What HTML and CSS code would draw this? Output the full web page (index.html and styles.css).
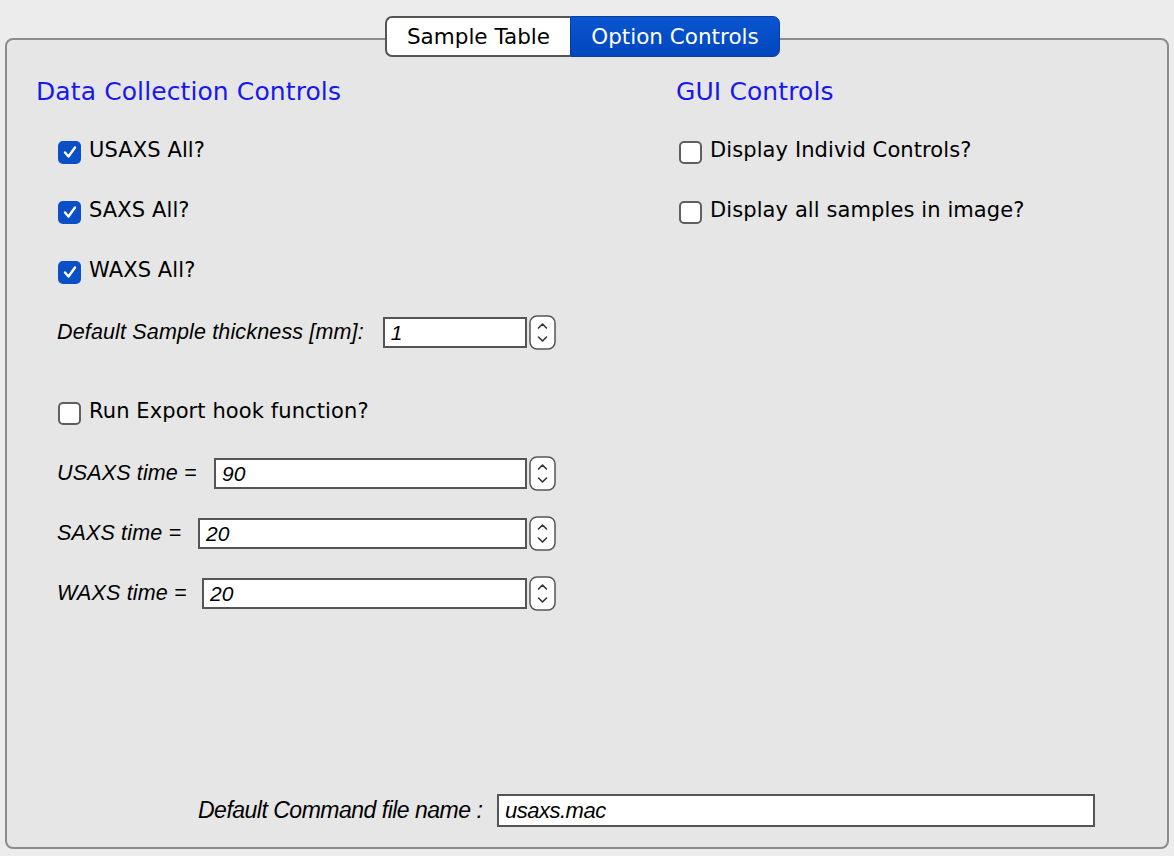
FILE: index.html
```html
<!DOCTYPE html>
<html>
<head>
<meta charset="utf-8">
<link rel="stylesheet" href="styles.css">
</head>
<body>
<div class="tabbar">
  <div class="tab tab-off">Sample Table</div>
  <div class="tab tab-on">Option Controls</div>
</div>
<div class="panel">
  <div class="columns">
    <div class="col col-left">
      <div class="heading">Data Collection Controls</div>
      <div class="row"><span class="cb checked"><svg viewBox="0 0 22 22" width="22" height="22"><path d="M6 11.5 L9.5 15.5 L16 6.5" fill="none" stroke="#fff" stroke-width="2.4" stroke-linecap="round" stroke-linejoin="round"/></svg></span><span class="cblabel">USAXS All?</span></div>
      <div class="row"><span class="cb checked"><svg viewBox="0 0 22 22" width="22" height="22"><path d="M6 11.5 L9.5 15.5 L16 6.5" fill="none" stroke="#fff" stroke-width="2.4" stroke-linecap="round" stroke-linejoin="round"/></svg></span><span class="cblabel">SAXS All?</span></div>
      <div class="row"><span class="cb checked"><svg viewBox="0 0 22 22" width="22" height="22"><path d="M6 11.5 L9.5 15.5 L16 6.5" fill="none" stroke="#fff" stroke-width="2.4" stroke-linecap="round" stroke-linejoin="round"/></svg></span><span class="cblabel">WAXS All?</span></div>
      <div class="row field-row">
        <span class="flabel">Default Sample thickness [mm]:</span>
        <span class="input w-thick">1</span>
        <span class="spin"><svg viewBox="0 0 27 35" width="27" height="35"><rect x="1" y="1" width="25" height="33" rx="7" fill="#fff" stroke="#555" stroke-width="1.5"/><path d="M9.5 13 L13.5 9 L17.5 13" fill="none" stroke="#333" stroke-width="1.6" stroke-linecap="round" stroke-linejoin="round"/><path d="M9.5 22 L13.5 26 L17.5 22" fill="none" stroke="#333" stroke-width="1.6" stroke-linecap="round" stroke-linejoin="round"/></svg></span>
      </div>
      <div class="row row-gap"><span class="cb"></span><span class="cblabel">Run Export hook function?</span></div>
      <div class="row field-row">
        <span class="flabel l-usaxs">USAXS time = </span>
        <span class="input grow">90</span>
        <span class="spin"><svg viewBox="0 0 27 35" width="27" height="35"><rect x="1" y="1" width="25" height="33" rx="7" fill="#fff" stroke="#555" stroke-width="1.5"/><path d="M9.5 13 L13.5 9 L17.5 13" fill="none" stroke="#333" stroke-width="1.6" stroke-linecap="round" stroke-linejoin="round"/><path d="M9.5 22 L13.5 26 L17.5 22" fill="none" stroke="#333" stroke-width="1.6" stroke-linecap="round" stroke-linejoin="round"/></svg></span>
      </div>
      <div class="row field-row">
        <span class="flabel l-saxs">SAXS time = </span>
        <span class="input grow">20</span>
        <span class="spin"><svg viewBox="0 0 27 35" width="27" height="35"><rect x="1" y="1" width="25" height="33" rx="7" fill="#fff" stroke="#555" stroke-width="1.5"/><path d="M9.5 13 L13.5 9 L17.5 13" fill="none" stroke="#333" stroke-width="1.6" stroke-linecap="round" stroke-linejoin="round"/><path d="M9.5 22 L13.5 26 L17.5 22" fill="none" stroke="#333" stroke-width="1.6" stroke-linecap="round" stroke-linejoin="round"/></svg></span>
      </div>
      <div class="row field-row">
        <span class="flabel l-waxs">WAXS time = </span>
        <span class="input grow">20</span>
        <span class="spin"><svg viewBox="0 0 27 35" width="27" height="35"><rect x="1" y="1" width="25" height="33" rx="7" fill="#fff" stroke="#555" stroke-width="1.5"/><path d="M9.5 13 L13.5 9 L17.5 13" fill="none" stroke="#333" stroke-width="1.6" stroke-linecap="round" stroke-linejoin="round"/><path d="M9.5 22 L13.5 26 L17.5 22" fill="none" stroke="#333" stroke-width="1.6" stroke-linecap="round" stroke-linejoin="round"/></svg></span>
      </div>
    </div>
    <div class="col col-right">
      <div class="heading">GUI Controls</div>
      <div class="row"><span class="cb"></span><span class="cblabel">Display Individ Controls?</span></div>
      <div class="row"><span class="cb"></span><span class="cblabel">Display all samples in image?</span></div>
    </div>
  </div>
  <div class="bottom">
    <span class="blabel">Default Command file name :</span>
    <span class="input binput">usaxs.mac</span>
  </div>
</div>
</body>
</html>
```

FILE: styles.css
```css
html, body {
  margin: 0;
  padding: 0;
  background: #ececec;
}
body {
  width: 1174px;
  height: 856px;
  overflow: hidden;
  font-family: "DejaVu Sans", "Noto Sans", sans-serif;
  color: #000;
}
.tabbar {
  position: relative;
  z-index: 2;
  display: flex;
  margin: 16px 0 -19px 385px;
  width: 395px;
  height: 41px;
}
.tab {
  box-sizing: border-box;
  height: 41px;
  display: flex;
  align-items: center;
  justify-content: center;
  font-size: 21.5px;
}
.tab-off {
  width: 185px;
  background: #fff;
  border: 2px solid #555;
  border-right: none;
  border-radius: 7px 0 0 7px;
  color: #000;
}
.tab-on {
  width: 210px;
  background: linear-gradient(#0a55d0, #0047bd);
  border: 1px solid #0a3f9e;
  border-radius: 0 7px 7px 0;
  color: #fff;
}
.panel {
  box-sizing: border-box;
  margin-left: 5px;
  width: 1164px;
  height: 811px;
  background: #e6e6e6;
  border: 2px solid #8c8c8c;
  border-radius: 8px;
  display: flex;
  flex-direction: column;
  padding: 20px 0 0 29px;
}
.columns {
  display: flex;
  flex: 1;
}
.col-left {
  width: 640px;
  display: flex;
  flex-direction: column;
}
.col-right {
  flex: 1;
  display: flex;
  flex-direction: column;
}
.heading {
  color: #1818ec;
  font-size: 25px;
  height: 62px;
  line-height: 64px;
  letter-spacing: 0.1px;
}
.row {
  height: 60px;
  display: flex;
  align-items: center;
  padding-left: 22px;
}
.col-right .row {
  padding-left: 3px;
}
.row-gap {
  margin-top: 21px;
}
.cb {
  box-sizing: border-box;
  width: 23px;
  height: 23px;
  border-radius: 5px;
  background: #fff;
  border: 2px solid #5f5f5f;
  margin-right: 8px;
  flex: none;
  display: flex;
  align-items: center;
  justify-content: center;
}
.cb.checked {
  background: #0a4fc6;
  border: none;
}
.cblabel {
  font-size: 21px;
  position: relative;
  top: -2px;
  letter-spacing: 0.1px;
}
.field-row {
  padding-left: 21px;
}
.flabel {
  font-family: "Liberation Sans", Arial, sans-serif;
  font-style: italic;
  font-size: 21.5px;
  letter-spacing: 0.15px;
  white-space: pre;
}
.input {
  box-sizing: border-box;
  height: 31px;
  background: #fff;
  border: 2px solid #555;
  font-family: "Liberation Sans", Arial, sans-serif;
  font-style: italic;
  font-size: 21px;
  line-height: 27px;
  padding-left: 6px;
}
.w-thick {
  width: 144px;
  margin-left: 19px;
}
.l-usaxs { width: 157px; }
.l-saxs { width: 141px; }
.l-waxs { width: 145px; }
.grow {
  width: 313px;
}
.l-saxs + .grow { width: 329px; }
.l-waxs + .grow { width: 325px; }
.spin {
  margin-left: 2px;
  height: 35px;
  display: flex;
}
.bottom {
  height: 76px;
  display: flex;
  align-items: center;
  padding-left: 162px;
  padding-top: 2px;
  box-sizing: border-box;
}
.blabel {
  font-family: "Liberation Sans", Arial, sans-serif;
  font-style: italic;
  font-size: 23px;
  letter-spacing: -0.5px;
  width: 299px;
}
.binput {
  width: 598px;
  height: 33px;
  font-size: 22px;
  line-height: 29px;
  letter-spacing: -0.5px;
}
```
